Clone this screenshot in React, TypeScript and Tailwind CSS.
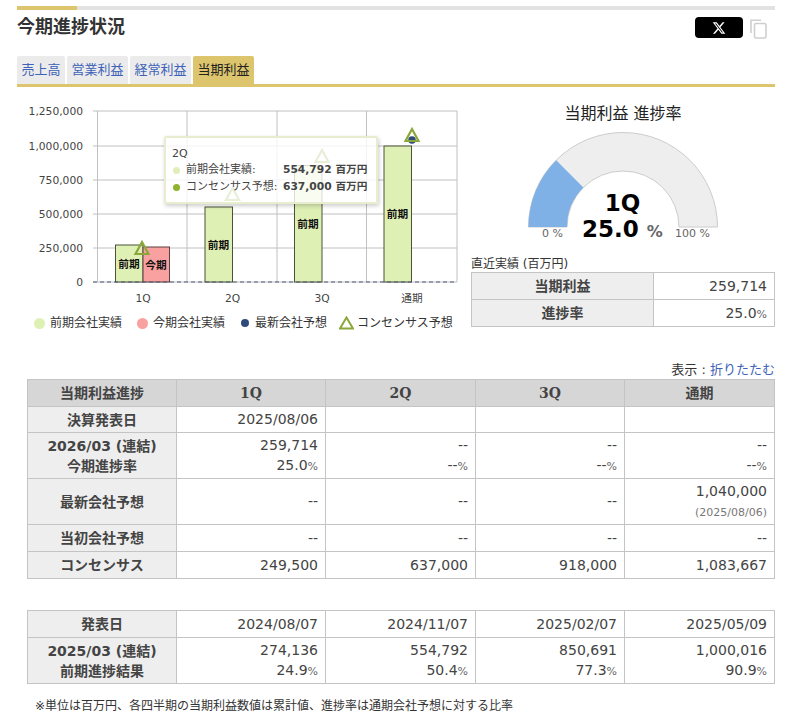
import React from 'react';

const gold = 'bg-[#dcc56d]';

const tabs = [
  { label: '売上高', w: 'w-[48px]' },
  { label: '営業利益', w: 'w-[61px]' },
  { label: '経常利益', w: 'w-[61px]' },
];

const gridY = [111, 146, 180, 214, 248, 282];
const gridX = [97.5, 187, 277, 366.5, 457];
const yLabels = ['1,250,000', '1,000,000', '750,000', '500,000', '250,000', '0'];
const xLabels: [number, string][] = [[143, '1Q'], [232.5, '2Q'], [322, '3Q'], [412, '通期']];
const prevBars = [
  { x: 115.5, top: 245 },
  { x: 205, top: 207 },
  { x: 294.5, top: 165.5 },
  { x: 384, top: 146 },
];

function Triangle({ x, y }: { x: number; y: number }) {
  return (
    <polygon
      points={`${x},${y - 7} ${x + 6.5},${y + 5} ${x - 6.5},${y + 5}`}
      fill="none"
      stroke="#8aa83a"
      strokeWidth="2.2"
    />
  );
}

function Chart() {
  return (
    <svg width="448" height="210" viewBox="17 100 448 210" className="block">
      {gridY.map((y) => (
        <line key={y} x1="93" x2="457" y1={y} y2={y} stroke="#c0c0c0" />
      ))}
      {gridX.map((x) => (
        <line key={x} x1={x} x2={x} y1="111" y2="282" stroke="#c0c0c0" />
      ))}
      {yLabels.map((t, i) => (
        <text key={t} x="83" y={gridY[i] + 4} textAnchor="end" fontSize="10.7" fill="#444">
          {t}
        </text>
      ))}
      {xLabels.map(([x, t]) => (
        <text key={t} x={x} y="302" textAnchor="middle" fontSize="10.7" fill="#444">
          {t}
        </text>
      ))}
      {prevBars.map((b) => (
        <rect key={b.x} x={b.x} y={b.top} width="27.5" height={282 - b.top} fill="#dff0b5" stroke="#4a5238" />
      ))}
      <rect x="143" y="247" width="26.5" height="35" fill="#f9a0a0" stroke="#5a4040" />
      <line x1="93" x2="457" y1="282" y2="282" stroke="#4d5a78" strokeDasharray="4 3" />
      {prevBars.map((b) => (
        <text key={b.x} x={b.x + 13.5} y={(b.top + 282) / 2 + 4} textAnchor="middle" fontSize="10.7" fontWeight="700" fill="#111">
          前期
        </text>
      ))}
      <text x="156" y="269" textAnchor="middle" fontSize="10.7" fontWeight="700" fill="#111">今期</text>
      <circle cx="412" cy="140" r="3.8" fill="#2f4b7c" />
      <Triangle x={142} y={249} />
      <Triangle x={232.5} y={195} />
      <Triangle x={322} y={157} />
      <Triangle x={412} y={136} />
    </svg>
  );
}

function Tooltip() {
  const rows = [
    { dot: 'bg-[#e3edb9]', label: '前期会社実績:', value: '554,792' },
    { dot: 'bg-[#8fb32f]', label: 'コンセンサス予想:', value: '637,000' },
  ];
  return (
    <div className="absolute left-[147px] top-[36px] w-[214px] h-[68px] bg-white/80 border-2 border-[#e8edcf] rounded-[2px] shadow-[1px_2px_4px_rgba(0,0,0,0.2)] pl-[6px] pt-[7px] text-[#444]">
      <div className="text-[11px] leading-[17px]">2Q</div>
      {rows.map((r) => (
        <div key={r.label} className="flex items-center h-[17px]">
          <span className={`ml-[1px] w-[7px] h-[7px] rounded-full ${r.dot}`} />
          <span className="ml-[6px] w-[97px] text-[11px] whitespace-nowrap">{r.label}</span>
          <span className="text-[10.7px] font-bold whitespace-nowrap">{r.value} 百万円</span>
        </div>
      ))}
    </div>
  );
}

function Legend() {
  return (
    <div className="flex items-center h-[20px] text-[12px] text-[#333] whitespace-nowrap">
      <span className="ml-[17px] w-[11px] h-[11px] rounded-full bg-[#dff0b5]" />
      <span className="ml-[5px]">前期会社実績</span>
      <span className="ml-[15px] w-[11px] h-[11px] rounded-full bg-[#f9a0a0]" />
      <span className="ml-[5px]">今期会社実績</span>
      <span className="ml-[16px] w-[8px] h-[8px] rounded-full bg-[#2f4b7c]" />
      <span className="ml-[6px]">最新会社予想</span>
      <svg width="15" height="14" viewBox="0 0 15 14" className="ml-[12px]">
        <polygon points="7.5,1.5 14,12.5 1,12.5" fill="none" stroke="#8aa83a" strokeWidth="2" />
      </svg>
      <span className="ml-[3px]">コンセンサス予想</span>
    </div>
  );
}

function Gauge() {
  return (
    <div className="relative w-[303px] h-[115px]">
      <svg width="303" height="115" viewBox="471 132 303 115" className="block">
        <path d="M528.5 227 A94.5 94.5 0 0 1 717.5 227 L679 227 A56 56 0 0 0 567 227 Z" fill="#eeeeee" stroke="#cccccc" />
        <path d="M528.5 227 A94.5 94.5 0 0 1 556.2 160.2 L583.4 187.4 A56 56 0 0 0 567 227 Z" fill="#7fb0e6" />
      </svg>
      <span className="absolute left-[71px] top-[94px] text-[11px] text-[#666]">0 %</span>
      <span className="absolute left-[204px] top-[94px] text-[11px] text-[#666]">100 %</span>
      <div className="absolute left-0 right-0 top-[58px] text-center font-bold text-black leading-[26px]">
        <div className="text-[23px]">1Q</div>
        <div className="text-[23px] whitespace-nowrap">
          25.0 <span className="text-[16px] text-[#666]">%</span>
        </div>
      </div>
    </div>
  );
}

const cell = 'border border-[#c4c4c4] text-right pr-[7px] text-[14px] font-normal align-middle';
const head = 'border border-[#c4c4c4] bg-[#eeeeee] text-center text-[14px] font-bold align-middle leading-[20px]';
const colHead = "border border-[#c4c4c4] bg-[#d6d6d6] text-center text-[14px] font-bold font-['DejaVu_Serif','Noto_Sans_CJK_JP',serif]";

function Pct({ v }: { v: string }) {
  return (
    <>
      {v}
      <span className="text-[11px] text-[#666]">%</span>
    </>
  );
}

function Cols() {
  return (
    <colgroup>
      <col className="w-[149px]" />
      <col className="w-[149px]" />
      <col className="w-[150px]" />
      <col className="w-[149px]" />
      <col className="w-[150px]" />
    </colgroup>
  );
}

function ProgressTable() {
  return (
    <table className="w-[747px] table-fixed border-collapse text-[#444]">
      <Cols />
      <tbody>
        <tr className="h-[27px]">
          <th className="border border-[#c4c4c4] bg-[#d6d6d6] text-center text-[14px] font-bold">当期利益進捗</th>
          {['1Q', '2Q', '3Q', '通期'].map((q) => (
            <th key={q} className={colHead}>{q}</th>
          ))}
        </tr>
        <tr className="h-[26px]">
          <th className={head}>決算発表日</th>
          <td className={cell}>2025/08/06</td>
          <td className={cell} />
          <td className={cell} />
          <td className={cell} />
        </tr>
        <tr className="h-[46px]">
          <th className={head}>
            2026/03 (連結)
            <br />
            今期進捗率
          </th>
          <td className={`${cell} leading-[20px]`}>
            259,714
            <br />
            <Pct v="25.0" />
          </td>
          {[0, 1, 2].map((i) => (
            <td key={i} className={`${cell} leading-[20px]`}>
              --
              <br />
              <Pct v="--" />
            </td>
          ))}
        </tr>
        <tr className="h-[46px]">
          <th className={head}>最新会社予想</th>
          <td className={cell}>--</td>
          <td className={cell}>--</td>
          <td className={cell}>--</td>
          <td className={`${cell} leading-[20px]`}>
            1,040,000
            <br />
            <span className="text-[11px] text-[#777]">(2025/08/06)</span>
          </td>
        </tr>
        <tr className="h-[27px]">
          <th className={head}>当初会社予想</th>
          <td className={cell}>--</td>
          <td className={cell}>--</td>
          <td className={cell}>--</td>
          <td className={cell}>--</td>
        </tr>
        <tr className="h-[27px]">
          <th className={head}>コンセンサス</th>
          <td className={cell}>249,500</td>
          <td className={cell}>637,000</td>
          <td className={cell}>918,000</td>
          <td className={cell}>1,083,667</td>
        </tr>
      </tbody>
    </table>
  );
}

function PreviousTable() {
  const rows = [
    ['274,136', '24.9'],
    ['554,792', '50.4'],
    ['850,691', '77.3'],
    ['1,000,016', '90.9'],
  ];
  return (
    <table className="w-[747px] table-fixed border-collapse text-[#444]">
      <Cols />
      <tbody>
        <tr className="h-[27px]">
          <th className={head}>発表日</th>
          {['2024/08/07', '2024/11/07', '2025/02/07', '2025/05/09'].map((d) => (
            <td key={d} className={cell}>{d}</td>
          ))}
        </tr>
        <tr className="h-[46px]">
          <th className={head}>
            2025/03 (連結)
            <br />
            前期進捗結果
          </th>
          {rows.map(([v, p]) => (
            <td key={v} className={`${cell} leading-[20px]`}>
              {v}
              <br />
              <Pct v={p} />
            </td>
          ))}
        </tr>
      </tbody>
    </table>
  );
}

export default function App() {
  return (
    <div className="w-[801px] h-[722px] overflow-hidden bg-white text-[#333] pt-[6px] pl-[17px] font-['DejaVu_Sans','Noto_Sans_CJK_JP',sans-serif]">
      <div className="w-[758px]">
        {/* Title */}
        <div className="h-[4px] bg-[#e2e2e2]">
          <div className={`h-[4px] w-[60px] ${gold}`} />
        </div>
        <div className="flex h-[46px] pt-[5px]">
          <h2 className="text-[18px] leading-[23px] font-bold text-[#333]">今期進捗状況</h2>
          <div className="ml-auto flex items-start mr-[8px] pt-[2px]">
            <div className="w-[48px] h-[21px] bg-black rounded-[4px] flex items-center justify-center">
              <svg width="14" height="14" viewBox="0 0 24 24" fill="#fff">
                <path d="M18.244 2.25h3.308l-7.227 8.26 8.502 11.24H16.17l-5.214-6.817L4.99 21.75H1.68l7.73-8.835L1.254 2.25H8.08l4.713 6.231zm-1.161 17.52h1.833L7.084 4.126H5.117z" />
              </svg>
            </div>
            <svg width="17" height="20" viewBox="0 0 17 20" className="ml-[7px] mt-[2px]" fill="none" stroke="#cfcfcf" strokeWidth="1.6">
              <path d="M1 14V1.2h10" />
              <rect x="4.5" y="4.5" width="11.5" height="14.5" rx="1.5" />
            </svg>
          </div>
        </div>

        {/* Tabs */}
        <div className="flex gap-[2px] h-[28px]">
          {tabs.map((t) => (
            <div key={t.label} className={`${t.w} bg-[#ebebeb] rounded-t-[2px] text-center text-[13px] leading-[28px] text-[#3d62b8]`}>
              {t.label}
            </div>
          ))}
          <div className={`w-[61px] ${gold} rounded-t-[2px] text-center text-[13px] leading-[28px] text-[#222]`}>当期利益</div>
        </div>
        <div className={`h-[3px] ${gold}`} />

        {/* Chart and gauge */}
        <div className="flex h-[270px]">
          <div className="w-[454px] pt-[13px]">
            <div className="relative">
              <Chart />
              <Tooltip />
            </div>
            <div className="mt-[3px]">
              <Legend />
            </div>
          </div>
          <div className="w-[304px]">
            <div className="text-center text-[16px] leading-[20px] mt-[17px] text-[#222]">当期利益 進捗率</div>
            <div className="mt-[8px]">
              <Gauge />
            </div>
            <div className="text-[12px] leading-[15px] mt-[10px] text-[#333]">直近実績 (百万円)</div>
            <table className="w-[303px] table-fixed border-collapse text-[#444]">
              <colgroup>
                <col className="w-[182px]" />
                <col className="w-[121px]" />
              </colgroup>
              <tbody>
                <tr className="h-[27px]">
                  <th className={head}>当期利益</th>
                  <td className={cell}>259,714</td>
                </tr>
                <tr className="h-[27px]">
                  <th className={head}>進捗率</th>
                  <td className={cell}><Pct v="25.0" /></td>
                </tr>
              </tbody>
            </table>
          </div>
        </div>

        {/* Detail tables */}
        <div className="text-right text-[13px] leading-[20px] mt-[3px] h-[19px]">
          表示 : <span className="text-[#3d62b8]">折りたたむ</span>
        </div>
        <div className="ml-[10px]">
          <ProgressTable />
        </div>
        <div className="ml-[10px] mt-[31px]">
          <PreviousTable />
        </div>
        <p className="ml-[18px] mt-[14px] text-[12px] leading-[16px] text-[#333]">
          ※単位は百万円、各四半期の当期利益数値は累計値、進捗率は通期会社予想に対する比率
        </p>
      </div>
    </div>
  );
}
